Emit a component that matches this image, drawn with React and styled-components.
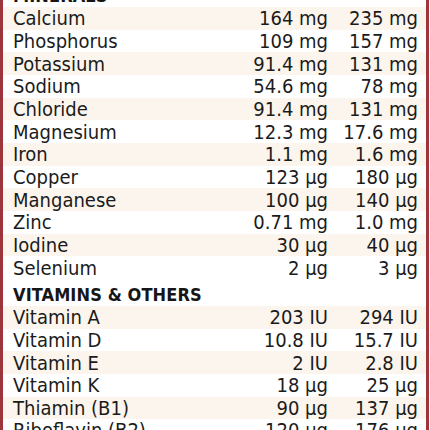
import React from "react";
import styled, { createGlobalStyle } from "styled-components";

const GlobalStyle = createGlobalStyle`
  body {
    margin: 0;
    background: #fff;
    font-family: "DejaVu Sans Condensed", "DejaVu Sans", sans-serif;
    font-stretch: condensed;
    color: #1b1b1b;
  }
`;

const sections = [
  {
    title: "Minerals",
    rows: [
      ["Calcium", "164 mg", "235 mg"],
      ["Phosphorus", "109 mg", "157 mg"],
      ["Potassium", "91.4 mg", "131 mg"],
      ["Sodium", "54.6 mg", "78 mg"],
      ["Chloride", "91.4 mg", "131 mg"],
      ["Magnesium", "12.3 mg", "17.6 mg"],
      ["Iron", "1.1 mg", "1.6 mg"],
      ["Copper", "123 µg", "180 µg"],
      ["Manganese", "100 µg", "140 µg"],
      ["Zinc", "0.71 mg", "1.0 mg"],
      ["Iodine", "30 µg", "40 µg"],
      ["Selenium", "2 µg", "3 µg"],
    ],
  },
  {
    title: "Vitamins & Others",
    rows: [
      ["Vitamin A", "203 IU", "294 IU"],
      ["Vitamin D", "10.8 IU", "15.7 IU"],
      ["Vitamin E", "2 IU", "2.8 IU"],
      ["Vitamin K", "18 µg", "25 µg"],
      ["Thiamin (B1)", "90 µg", "137 µg"],
      ["Riboflavin (B2)", "120 µg", "176 µg"],
    ],
  },
];

const App = () => {
  return (
    <>
      <GlobalStyle />
      <Table>
        {sections.map((section) => (
          <Section key={section.title}>
            <Heading>{section.title}</Heading>
            {section.rows.map(([name, a, b], i) => (
              <Row key={name} $striped={i % 2 === 0}>
                <Name>{name}</Name>
                <Value>{a}</Value>
                <Value>{b}</Value>
              </Row>
            ))}
          </Section>
        ))}
      </Table>
    </>
  );
};

export default App;

const Table = styled.div`
  width: 423px;
  margin-top: -20px;
  border-left: 3px solid #9c363c;
  border-right: 3px solid #9c363c;
`;

const Section = styled.div`
  display: flex;
  flex-direction: column;
`;

const Heading = styled.div`
  height: 27px;
  padding: 4px 0 0 10px;
  box-sizing: border-box;
  font-size: 18px;
  font-weight: 700;
  letter-spacing: 0.1px;
  text-transform: uppercase;
  line-height: 23px;
  color: #161616;
`;

const Row = styled.div`
  display: grid;
  grid-template-columns: 1fr 90px 90px;
  align-items: center;
  height: 22.67px;
  padding: 0 8px 0 10px;
  font-size: 20px;
  font-weight: 300;
  line-height: 22px;
  background: ${(p) => (p.$striped ? "#fcf5ed" : "#fff")};
`;

const Name = styled.span`
  white-space: nowrap;
`;

const Value = styled.span`
  text-align: right;
  white-space: nowrap;
`;
